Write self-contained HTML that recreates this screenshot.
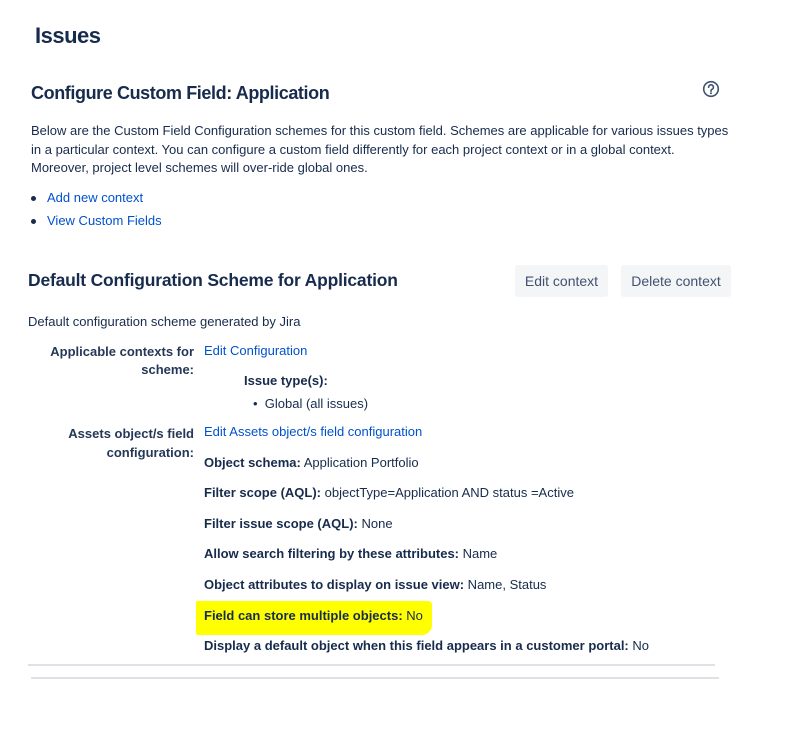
<!DOCTYPE html>
<html><head><meta charset="utf-8"><style>
body{margin:0;width:800px;height:737px;background:#fff;font-family:"Liberation Sans",sans-serif;color:#172b4d;position:relative;overflow:hidden}
.a{position:absolute;white-space:nowrap;font-size:13px;line-height:16px}
.l{color:#0052cc}
b{font-weight:bold}
.r{text-align:right}
.btn{position:absolute;background:#f4f5f7;border-radius:3px;color:#42526e;font-size:14px;line-height:32px;text-align:center}
.hr{position:absolute;height:2px;background:#dfe1e6}
.dot{position:absolute;width:5px;height:5px;border-radius:50%;background:#172b4d}
</style></head><body>
<div class="a" style="left:35px;top:21px;font-size:22px;line-height:30px;font-weight:bold;letter-spacing:-0.5px">Issues</div>
<div class="a" style="left:31px;top:81px;font-size:18px;line-height:24px;font-weight:bold;letter-spacing:-0.4px">Configure Custom Field: Application</div>
<svg style="position:absolute;left:702px;top:80px" width="18" height="18" viewBox="0 0 18 18"><circle cx="9" cy="9" r="7.3" fill="none" stroke="#42526e" stroke-width="1.6"/><path d="M6.6 7.2a2.4 2.4 0 1 1 3.3 2.2c-.6.3-.9.7-.9 1.4v.5" fill="none" stroke="#42526e" stroke-width="1.6" stroke-linecap="round"/><circle cx="9" cy="13.2" r="1" fill="#42526e"/></svg>
<div class="a" style="left:31px;top:123px">Below are the Custom Field Configuration schemes for this custom field. Schemes are applicable for various issues types</div>
<div class="a" style="left:31px;top:142px">in a particular context. You can configure a custom field differently for each project context or in a global context.</div>
<div class="a" style="left:31px;top:160px">Moreover, project level schemes will over-ride global ones.</div>
<div class="dot" style="left:31px;top:196px"></div>
<div class="a l" style="left:47px;top:190px">Add new context</div>
<div class="dot" style="left:31px;top:219px"></div>
<div class="a l" style="left:47px;top:213px">View Custom Fields</div>
<div class="a" style="left:28px;top:268px;font-size:17.5px;line-height:24px;font-weight:bold;letter-spacing:-0.2px">Default Configuration Scheme for Application</div>
<div class="btn" style="left:515px;top:265px;width:93px;height:32px">Edit context</div>
<div class="btn" style="left:621px;top:265px;width:110px;height:32px">Delete context</div>
<div class="a" style="left:28px;top:314px">Default configuration scheme generated by Jira</div>
<div class="a r" style="right:606px;top:343px;line-height:18px;font-weight:bold;color:#253858">Applicable contexts for<br>scheme:</div>
<div class="a l" style="left:204px;top:343px">Edit Configuration</div>
<div class="a" style="left:244px;top:373px;font-weight:bold">Issue type(s):</div>
<div class="a" style="left:253px;top:396px">•&nbsp; Global (all issues)</div>
<div class="a r" style="right:606px;top:424px;line-height:19px;font-weight:bold;color:#253858">Assets object/s field<br>configuration:</div>
<div class="a l" style="left:204px;top:424px">Edit Assets object/s field configuration</div>
<div class="a" style="left:204px;top:455px"><b>Object schema:</b> Application Portfolio</div>
<div class="a" style="left:204px;top:485px"><b>Filter scope (AQL):</b> objectType=Application AND status =Active</div>
<div class="a" style="left:204px;top:516px"><b>Filter issue scope (AQL):</b> None</div>
<div class="a" style="left:204px;top:546px"><b>Allow search filtering by these attributes:</b> Name</div>
<div class="a" style="left:204px;top:577px"><b>Object attributes to display on issue view:</b> Name, Status</div>
<div style="position:absolute;left:196px;top:601px;width:236px;height:34px;background:#ffff00;border-radius:2px 4px 10px 2px"></div>
<div class="a" style="left:204px;top:608px"><b>Field can store multiple objects:</b> No</div>
<div class="a" style="left:204px;top:638px"><b>Display a default object when this field appears in a customer portal:</b> No</div>
<div class="hr" style="left:28px;top:664px;width:687px"></div>
<div class="hr" style="left:31px;top:677px;width:688px"></div>
</body></html>
